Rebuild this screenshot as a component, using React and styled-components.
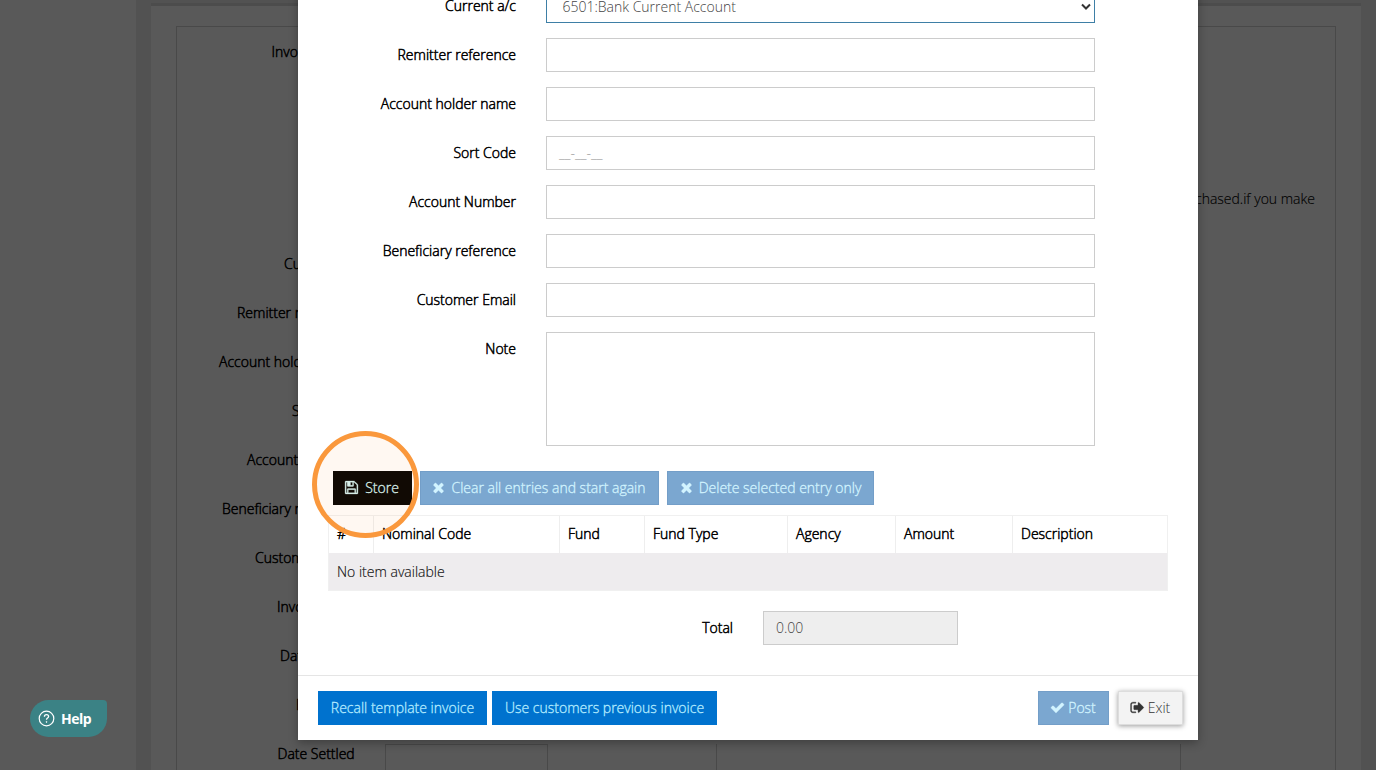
import React from 'react';
import styled, { createGlobalStyle } from 'styled-components';

const Global = createGlobalStyle`
  * { box-sizing: border-box; }
  html, body, #root { height: 100%; }
  body {
    margin: 0;
    overflow: hidden;
    background: #fff;
    color: #000;
    font: 300 14px/20px "Open Sans", sans-serif;
  }
`;

const Screen = styled.div`
  position: relative;
  display: flex;
  width: 1376px;
  height: 770px;
  overflow: hidden;
`;
const SideNav = styled.div`
  flex: 0 0 136px;
`;
const Content = styled.main`
  flex: 1;
  min-width: 0;
  padding: 3px 15px 0;
  background: #ebebeb;
`;
const Card = styled.section`
  height: 767px;
  padding: 20px 25px 0;
  background: #fff;
  border-top: 3px solid #dadada;
`;
const PageForm = styled.div`
  height: 744px;
  padding-top: 15px;
  border: 1px solid #d2d2d2;
  border-bottom: 0;
`;
const PageRow = styled.div`
  display: flex;
  align-items: flex-start;
  height: ${(p) => p.$height || 49}px;
`;
const PageLabel = styled.div`
  flex: 0 0 208px;
  padding-left: ${(p) => p.$indent}px;
  line-height: 20px;
  white-space: nowrap;
  -webkit-text-stroke: 0.5px #000;
`;
const Hint = styled.p`
  margin: 0 20px 0 auto;
  line-height: 20px;
  -webkit-text-stroke: 0.15px #000;
`;
const DateBox = styled.div`
  width: 163px;
  height: 34px;
  border: 1px solid #d2d2d2;
`;
const Details = styled.div`
  width: 465px;
  height: 49px;
  margin-left: 168px;
  border: solid #d2d2d2;
  border-width: 0 1px;
`;

const Backdrop = styled.div`
  position: absolute;
  inset: 0;
  display: flex;
  align-items: flex-end;
  padding: 0 0 30px 298px;
  background: rgba(0, 0, 0, 0.65);
`;
const Dialog = styled.div`
  width: 900px;
  background: #fff;
  box-shadow: 0 3px 9px rgba(0, 0, 0, 0.3);
`;
const Body = styled.div`
  padding: 0 30px 30px;
`;
const Row = styled.div`
  display: flex;
  align-items: flex-start;
  margin-bottom: ${(p) => p.$gap || 15}px;
`;
const Label = styled.label`
  width: ${(p) => p.$width || 188}px;
  margin-right: 30px;
  padding-top: 7px;
  text-align: right;
  white-space: nowrap;
  -webkit-text-stroke: 0.5px #000;
`;
const Field = styled.div`
  display: flex;
  align-items: ${(p) => (p.$tall ? 'flex-start' : 'center')};
  justify-content: space-between;
  width: ${(p) => p.$width || 549}px;
  height: ${(p) => (p.$tall ? 114 : 34)}px;
  padding: ${(p) => (p.$active ? '2px 3px 0 15.5px' : '0 12px')};
  color: ${(p) => (p.$placeholder ? '#999' : '#444')};
  background: ${(p) => (p.$disabled ? '#eee' : '#fff')};
  border: 1px solid ${(p) => (p.$active ? '#3e7fa6' : '#ccc')};
`;
const Actions = styled.div`
  display: flex;
  gap: ${(p) => p.$gap}px;
`;
const StoreActions = styled(Actions)`
  margin: 25px 0 10px 5px;
`;
const Button = styled.button`
  display: flex;
  align-items: center;
  justify-content: center;
  gap: ${(p) => p.$gap || 5}px;
  width: ${(p) => p.$width}px;
  height: 34px;
  padding: 0 ${(p) => p.$inset || 0}px 0 0;
  font: inherit;
  white-space: nowrap;
  border: 0;
  -webkit-text-stroke: 0.3px currentColor;
  ${(p) =>
    ({
      store: 'background: #000; color: #d5f5f5;',
      primary: 'background: #0072ce; color: #b5ecff;',
      muted: 'background: #7ba7d0; color: #d2f4ff; border: 1px solid #739ec8;',
      light:
        'background: #f3f3f3; color: #333; border: 1px solid #ddd; box-shadow: 0 1px 5px rgba(0,0,0,.4); -webkit-text-stroke: 0;',
    })[p.$kind]}

  svg { margin-top: -1px; }
`;
const Table = styled.div`
  width: 840px;
  border: 1px solid #f0f0f0;
`;
const HeadRow = styled.div`
  display: grid;
  grid-template-columns: 45px 186px 85px 143px 108px 117px 1fr;
  height: 37px;
`;
const HeadCell = styled.div`
  padding: 8px;
  -webkit-text-stroke: 0.5px #000;
  border-right: 1px solid #eee;
  &:last-child { border-right: 0; }
`;
const EmptyRow = styled.div`
  height: 37px;
  padding: 9px 8px;
  color: #111;
  background: #eeecee;
  -webkit-text-stroke: 0.15px #111;
`;
const TotalRow = styled(Row)`
  margin: 20px 0 0;
`;
const Footer = styled.footer`
  display: flex;
  justify-content: space-between;
  height: 65px;
  padding: 15px 15px 0 20px;
  border-top: 1px solid #e5e5e5;
`;
const Ring = styled.div`
  position: absolute;
  left: 312px;
  top: 431px;
  width: 107px;
  height: 107px;
  border: 5px solid #fa983c;
  border-radius: 50%;
  background: rgba(250, 150, 60, 0.065);
`;
const Help = styled.button`
  position: absolute;
  left: 30px;
  top: 700px;
  display: flex;
  align-items: center;
  gap: 6px;
  width: 77px;
  height: 37px;
  padding: 0 0 0 8px;
  color: #fff;
  font: 700 14px/20px "Open Sans", sans-serif;
  letter-spacing: -0.5px;
  background: #3b8285;
  border: 0;
  border-radius: 19px 4px 19px 19px;
`;

const PATHS = {
  save: 'M512 1536h768v-384h-768v384zm896 0h128v-896q0-14-10-38.5t-20-34.5l-281-281q-10-10-34-20t-39-10v416q0 40-28 68t-68 28h-576q-40 0-68-28t-28-68v-416h-128v1280h128v-416q0-40 28-68t68-28h832q40 0 68 28t28 68v416zm-384-928v-320q0-13-9.5-22.5t-22.5-9.5h-192q-13 0-22.5 9.5t-9.5 22.5v320q0 13 9.5 22.5t22.5 9.5h192q13 0 22.5-9.5t9.5-22.5zm640 32v928q0 40-28 68t-68 28h-1344q-40 0-68-28t-28-68v-1344q0-40 28-68t68-28h928q40 0 88 20t76 48l280 280q28 28 48 76t20 88z',
  times: 'M1490 1322q0 40-28 68l-136 136q-28 28-68 28t-68-28l-294-294-294 294q-28 28-68 28t-68-28l-136-136q-28-28-28-68t28-68l294-294-294-294q-28-28-28-68t28-68l136-136q28-28 68-28t68 28l294 294 294-294q28-28 68-28t68 28l136 136q28 28 28 68t-28 68l-294 294 294 294q28 28 28 68z',
  check: 'M1671 566q0 40-28 68l-724 724-136 136q-28 28-68 28t-68-28l-136-136-362-362q-28-28-28-68t28-68l136-136q28-28 68-28t68 28l294 295 656-657q28-28 68-28t68 28l136 136q28 28 28 68z',
  exit: 'M704 1440q0 4 1 20t.5 26.5-3 23.5-10 19.5-20.5 6.5h-320q-119 0-203.5-84.5t-84.5-203.5v-704q0-119 84.5-203.5t203.5-84.5h320q13 0 22.5 9.5t9.5 22.5q0 4 1 20t.5 26.5-3 23.5-10 19.5-20.5 6.5h-320q-66 0-113 47t-47 113v704q0 66 47 113t113 47h312l11.5 1 11.5 3 8 5.5 7 9 2 13.5zm928-544q0 26-19 45l-544 544q-19 19-45 19t-45-19-19-45v-288h-448q-26 0-45-19t-19-45v-384q0-26 19-45t45-19h448v-288q0-26 19-45t45-19 45 19l544 544q19 19 19 45z',
};

const Icon = ({ name, size = 15 }) => (
  <svg width={size} height={size} viewBox="0 0 1792 1792" fill="currentColor" stroke="currentColor" strokeWidth="40">
    <path d={PATHS[name]} />
  </svg>
);

const pageRows = [
  ['Invoice Type', 94.5, 147],
  ['', 0, 65],
  ['Current a/c', 107],
  ['Remitter reference', 60],
  ['Account holder name', 42],
  ['Sort Code', 115],
  ['Account Number', 70],
  ['Beneficiary reference', 45],
  ['Customer Email', 78],
  ['Invoice No', 100],
  ['Date Raised', 103],
  ['End Date', 119],
];

const fields = [
  'Remitter reference',
  'Account holder name',
  'Sort Code',
  'Account Number',
  'Beneficiary reference',
  'Customer Email',
];

const columns = ['#', 'Nominal Code', 'Fund', 'Fund Type', 'Agency', 'Amount', 'Description'];

export default function App() {
  return (
    <>
      <Global />
      <Screen>
        <SideNav />
        <Content>
          <Card>
            <PageForm>
              {pageRows.map(([text, indent, height], i) => (
                <PageRow key={i} $height={height}>
                  <PageLabel $indent={indent}>{text}</PageLabel>
                  {!text && <Hint>purchased.if you make</Hint>}
                </PageRow>
              ))}
              <PageRow>
                <PageLabel $indent={100.5}>Date Settled</PageLabel>
                <DateBox />
                <Details />
              </PageRow>
            </PageForm>
          </Card>
        </Content>

        <Backdrop>
          <Dialog role="dialog">
            <Body>
              <Row>
                <Label>Current a/c</Label>
                <Field $active>
                  6501:Bank Current Account
                  <svg width="10" height="8" viewBox="0 0 10 8" fill="none">
                    <path d="M1 1.5l4 4 4-4" stroke="#333" strokeWidth="2" />
                  </svg>
                </Field>
              </Row>
              {fields.map((name) => (
                <Row key={name}>
                  <Label>{name}</Label>
                  <Field $placeholder>{name === 'Sort Code' && '__-__-__'}</Field>
                </Row>
              ))}
              <Row>
                <Label>Note</Label>
                <Field $tall />
              </Row>
              <StoreActions $gap={8}>
                <Button $kind="store" $width={79} $gap={6} $inset={2}><Icon name="save" />Store</Button>
                <Button $kind="muted" $width={239} $gap={5} $inset={2}>
                  <Icon name="times" />Clear all entries and start again
                </Button>
                <Button $kind="muted" $width={207} $gap={5} $inset={1}>
                  <Icon name="times" />Delete selected entry only
                </Button>
              </StoreActions>
              <Table>
                <HeadRow>
                  {columns.map((c) => <HeadCell key={c}>{c}</HeadCell>)}
                </HeadRow>
                <EmptyRow>No item available</EmptyRow>
              </Table>
              <TotalRow>
                <Label $width={405}>Total</Label>
                <Field $width={195} $disabled>0.00</Field>
              </TotalRow>
            </Body>
            <Footer>
              <Actions $gap={5}>
                <Button $kind="primary" $width={169}>Recall template invoice</Button>
                <Button $kind="primary" $width={225}>Use customers previous invoice</Button>
              </Actions>
              <Actions $gap={9}>
                <Button $kind="muted" $width={71} $gap={3} $inset={1}><Icon name="check" />Post</Button>
                <Button $kind="light" $width={65} $gap={3} $inset={1}><Icon name="exit" />Exit</Button>
              </Actions>
            </Footer>
          </Dialog>
        </Backdrop>
        <Ring />
        <Help>
          <svg width="17" height="17" viewBox="0 0 17 17" fill="none" stroke="#fff">
            <circle cx="8.5" cy="8.5" r="7.3" strokeWidth="1.2" />
            <path d="M6.4 6.8c0-1.3.9-2.1 2.1-2.1s2.1.8 2.1 1.9c0 1.5-2.1 1.5-2.1 3.2" strokeWidth="1.3" />
            <circle cx="8.5" cy="11.9" r=".5" strokeWidth=".7" fill="#fff" />
          </svg>
          Help
        </Help>
      </Screen>
    </>
  );
}
